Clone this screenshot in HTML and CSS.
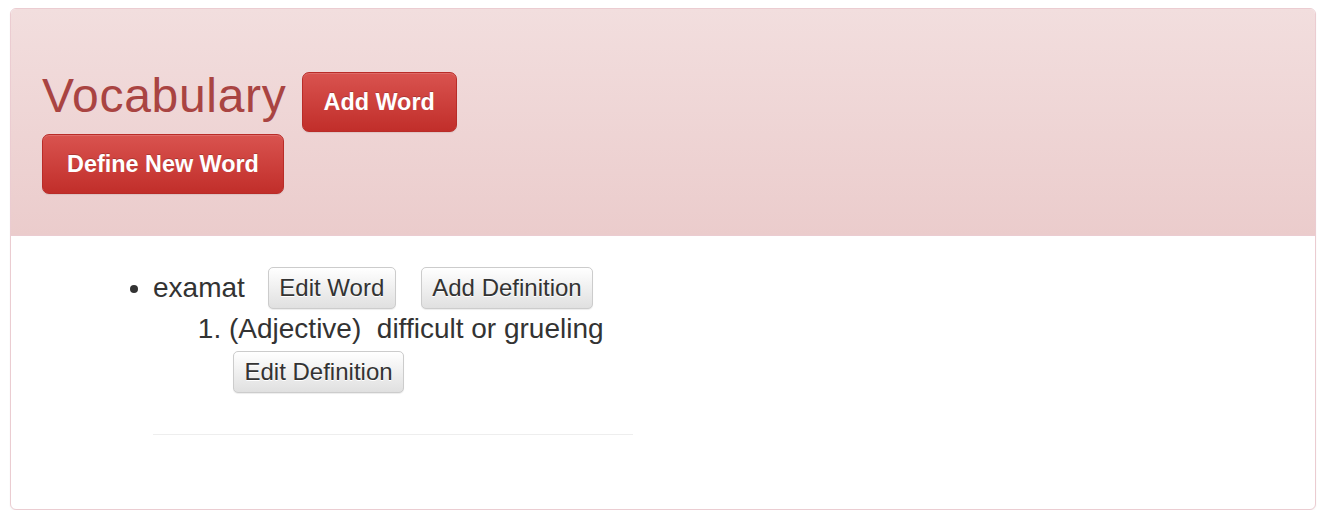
FILE: index.html
```html
<!DOCTYPE html>
<html>
<head>
<meta charset="utf-8">
<title>Vocabulary</title>
<link rel="stylesheet" href="styles.css">
</head>
<body>
<div class="panel">
  <div class="panel-heading">
    <div class="title-row">
      <h1 class="title">Vocabulary</h1>
      <button class="btn btn-danger btn-lg">Add Word</button>
    </div>
    <div class="heading-actions">
      <button class="btn btn-danger btn-lg btn-wide">Define New Word</button>
    </div>
  </div>
  <div class="panel-body">
    <ul class="words">
      <li class="word">
        <div class="word-row">
          <span class="word-text">examat</span>
          <button class="btn btn-default">Edit Word</button>
          <button class="btn btn-default">Add Definition</button>
        </div>
        <ol class="defs">
          <li class="def">
            <div class="def-text">(Adjective)&nbsp; difficult or grueling</div>
            <button class="btn btn-default def-edit">Edit Definition</button>
          </li>
        </ol>
        <hr class="divider">
      </li>
    </ul>
  </div>
</div>
</body>
</html>
```

FILE: styles.css
```css
* { box-sizing: border-box; }

html, body {
  margin: 0;
  padding: 0;
  background: #fff;
}

body {
  padding: 8px 10px 0 10px;
  font-family: "Liberation Sans", Arial, sans-serif;
  font-size: 23.4px;
  line-height: 1.42857;
  color: #333;
}

.panel {
  width: 1306px;
  border: 1px solid #ebccd1;
  border-radius: 6px;
  background: #fff;
  box-shadow: 0 1px 2px rgba(0, 0, 0, 0.05);
  overflow: hidden;
}

.panel-heading {
  padding: 63px 31px 41px 31px;
  background-image: linear-gradient(to bottom, #f2dede 0%, #ebcccc 100%);
  border-bottom: 1px solid #ebccd1;
  display: flex;
  flex-direction: column;
  gap: 2px;
}

.title-row {
  display: flex;
  align-items: flex-start;
  gap: 15px;
}

.title {
  margin: 0;
  font-size: 48px;
  line-height: 48px;
  font-weight: 400;
  letter-spacing: 0.7px;
  color: #a94442;
}

.heading-actions {
  display: flex;
}

.btn {
  font-family: "Liberation Sans", Arial, sans-serif;
  display: inline-block;
  margin: 0;
  cursor: pointer;
  white-space: nowrap;
  border: 1px solid transparent;
}

.btn-lg {
  height: 60px;
  padding: 0 21px;
  font-size: 23.4px;
  font-weight: 700;
  line-height: 58px;
  border-radius: 7px;
}

.btn-wide {
  padding: 0 24px;
}

.btn-danger {
  color: #fff;
  background-image: linear-gradient(to bottom, #d9534f 0%, #c12e2a 100%);
  border-color: #b92c28;
  text-shadow: 0 -1px 0 rgba(0, 0, 0, 0.2);
  box-shadow: inset 0 1px 0 rgba(255, 255, 255, 0.15), 0 1px 1px rgba(0, 0, 0, 0.075);
}

.btn-default {
  height: 42px;
  padding: 0 10.5px;
  font-size: 24px;
  font-weight: 400;
  line-height: 40px;
  color: #333;
  border-radius: 5px;
  background-image: linear-gradient(to bottom, #fff 0%, #e0e0e0 100%);
  border-color: #ccc;
  text-shadow: 0 1px 0 #fff;
  box-shadow: inset 0 1px 0 rgba(255, 255, 255, 0.15), 0 1px 1px rgba(0, 0, 0, 0.075);
}

.panel-body {
  padding: 31px 31px 74px 31px;
}

.words {
  margin: 0;
  padding: 0 0 0 111px;
  list-style: disc;
  font-size: 28px;
}

.word-row {
  display: flex;
  align-items: center;
  height: 42px;
}

.word-text {
  margin-right: 23px;
}

.word-row .btn + .btn {
  margin-left: 25px;
}

.defs {
  margin: 2px 0 0 0;
  padding: 0 0 0 76px;
  list-style: decimal;
  line-height: 36px;
}

.def-text {
  line-height: 36px;
}

.def-edit {
  margin-top: 4px;
  margin-left: 4px;
}

.divider {
  width: 480px;
  margin: 41px 0 0 0;
  border: 0;
  border-top: 1px solid #eee;
  height: 0;
}
```
